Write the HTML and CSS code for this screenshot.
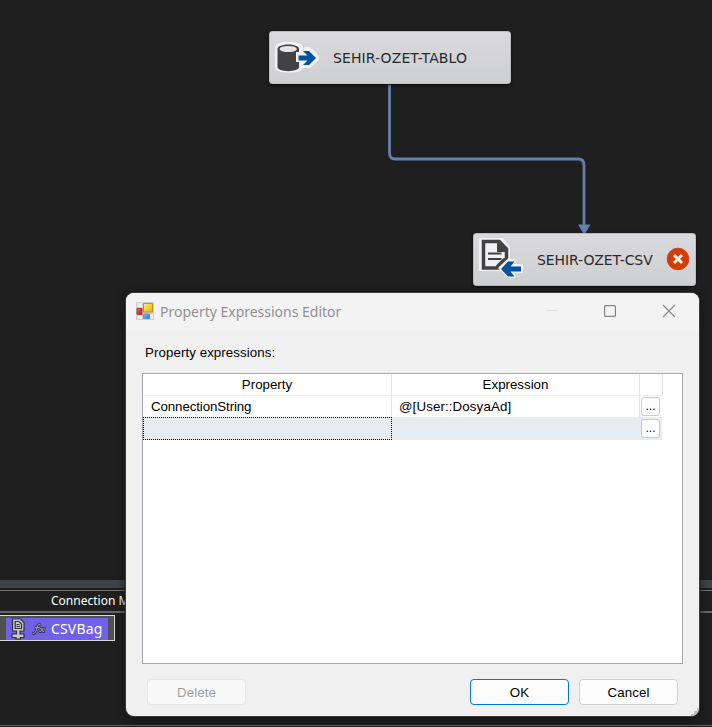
FILE: index.html
```html
<!DOCTYPE html>
<html lang="en">
<head>
<meta charset="utf-8">
<title>Property Expressions Editor</title>
<link rel="stylesheet" href="styles.css">
</head>
<body>
<main class="designer">
  <section class="canvas">
    <svg class="connector" width="712" height="290" viewBox="0 0 712 290">
      <path d="M389.500 84V153Q389.500 159 395.500 159H578Q584 159 584 165V226" fill="none" stroke="#6481ac" stroke-width="2.800"/>
      <path d="M578 224.500H590.500L585.500 233H583Z" fill="#6481ac"/>
    </svg>
    <div class="node node-source">
      <svg class="node-icon cylinder-icon" width="46" height="36" viewBox="0 0 46 36">
        <path d="M3 8C3 1 29 1 29 8V11H32V8H37L46 18L37 27H29C29 33 3 33 3 27Z" fill="#f1f1f3" stroke="#f1f1f3" stroke-width="2" stroke-linejoin="round"/>
        <path d="M4.500 9C4.500 3 26 3 26 9V12H23V22H26V27C26 32.500 4.500 32.500 4.500 27Z" fill="#424242"/>
        <ellipse cx="15.200" cy="9" rx="8.700" ry="3.100" fill="#e5e5e7"/>
        <path d="M25.500 15.500H34.500L30 11H36L43 18L36 25H30L34.500 20.500H25.500Z" fill="#00539c"/>
      </svg>
      <span class="label label-source">SEHIR-OZET-TABLO</span>
    </div>
    <div class="node node-target">
      <svg class="node-icon doc-icon" width="46" height="42" viewBox="0 0 46 42">
        <path d="M1 1H25L32 10V23L37 21L36 27H45V36H37V41H32L24 34H1Z" fill="#f1f1f3"/>
        <path d="M5.500 4.500H21L28.500 12V23H26L20 29V31H5.500Z" fill="#f1f1f3" stroke="#424242" stroke-width="3.500"/>
        <path d="M19 3H22L30 12V15H19Z" fill="#424242"/>
        <path d="M10 16.500H23.500M10 22H23.500" stroke="#424242" stroke-width="2.200"/>
        <path d="M20 31L30 21.500L38 24L35 28H44V35H35L38 40H29Z" fill="#f1f1f3"/>
        <path d="M23 32L30 24.500H36.500L32.500 29.500H43V34.500H32.500L36.500 39.500H30Z" fill="#00539c"/>
      </svg>
      <span class="label label-target">SEHIR-OZET-CSV</span>
      <svg class="error-icon" width="24" height="24" viewBox="0 0 24 24">
        <circle cx="12" cy="12" r="10.800" fill="#d83b01" stroke="#ba4b25"/>
        <path d="M8 8L16 16M16 8L8 16" stroke="#f4f0ee" stroke-width="3"/>
      </svg>
    </div>
  </section>
  <div class="splitter"></div>
  <section class="connections">
    <header class="connections-head"><span>Connection Managers</span></header>
    <div class="connection">
      <div class="connection-fill">
        <svg width="26" height="22" viewBox="0 0 26 22" class="connection-icon">
          <path d="M6.500 1H14.500L18 4.500V13H14V16H18V19.500H14.500V21H10V19.500H6V16H10.500V13H6.500Z" fill="#c8c8cc" stroke="#303034" stroke-width="1.200"/>
          <path d="M9.200 3.500H13L15.500 6V10.500H9.200Z" fill="#c8c8cc" stroke="#303034" stroke-width="1.200"/>
          <path d="M10.500 6.500H13.500M10.500 8.500H14" stroke="#303034"/>
        </svg>
        <svg class="fx" width="16" height="14" viewBox="0 0 16 14">
          <g fill="none" stroke-linecap="round">
            <path d="M1 11.500Q3 12 4 9L5.500 4Q6.200 2 8 2.500M3.500 5.500H7.500M8 6Q9.500 5.500 10 8Q10.500 10.500 12 9.500M12.500 6Q11 5.500 10 8Q9 10.500 7.500 9.500" stroke="#34323f" stroke-width="2.400"/>
            <path d="M1 11.500Q3 12 4 9L5.500 4Q6.200 2 8 2.500M3.500 5.500H7.500M8 6Q9.500 5.500 10 8Q10.500 10.500 12 9.500M12.500 6Q11 5.500 10 8Q9 10.500 7.500 9.500" stroke="#aaa7c2" stroke-width="0.900"/>
          </g>
        </svg>
        <span class="connection-name">CSVBag</span>
      </div>
    </div>
  </section>
  <footer class="bottom-edge"></footer>
</main>

<div class="dialog" role="dialog">
  <header class="titlebar">
    <svg class="app-icon" width="18" height="18" viewBox="0 0 18 18">
      <defs>
        <linearGradient id="gold" x2="1" y2="1"><stop stop-color="#ffe88a"/><stop offset="1" stop-color="#e8b200"/></linearGradient>
        <linearGradient id="red" x2="1" y2="1"><stop stop-color="#e0705e"/><stop offset="1" stop-color="#a81812"/></linearGradient>
        <linearGradient id="blue" x2="1" y2="1"><stop stop-color="#82b8ff"/><stop offset="1" stop-color="#3474d8"/></linearGradient>
      </defs>
      <path d="M0 0H18V18H0Z" fill="#cfcfcf"/>
      <path d="M1.500 1H6V5H1.500ZM1.500 13.500H6V17H1.500ZM14.500 12H17V17H14.500Z" fill="#efefef"/>
      <path d="M7.500 1.500H16.500V10H7.500Z" fill="url(#gold)" stroke="#c39600"/>
      <path d="M1 6.500H6V12.500H1Z" fill="url(#red)" stroke="#b33a2e"/>
      <path d="M7.500 12H13.500V16.500H7.500Z" fill="url(#blue)" stroke="#5a91e6"/>
    </svg>
    <h1 class="title">Property Expressions Editor</h1>
    <svg class="window-controls" width="132" height="14" viewBox="0 0 132 14">
      <path d="M0 6.500H12" stroke="#dedede"/>
      <rect x="58.600" y="1.600" width="10.800" height="10.800" rx="1" fill="none" stroke="#858585" stroke-width="1.200"/>
      <path d="M117 1L129 13M129 1L117 13" stroke="#858585" stroke-width="1.100"/>
    </svg>
  </header>
  <div class="dialog-body">
    <p class="caption">Property expressions:</p>
    <div class="table">
      <div class="row head">
        <div class="cell">Property</div><div class="cell">Expression</div><div class="cell"></div>
      </div>
      <div class="row entry">
        <div class="cell">ConnectionString</div><div class="cell expression">@[User::DosyaAd]</div><div class="cell action"><button class="more">...</button></div>
      </div>
      <div class="row selected">
        <div class="cell focused"></div><div class="cell"></div><div class="cell action"><button class="more">...</button></div>
      </div>
    </div>
    <div class="buttons">
      <button class="button" disabled>Delete</button>
      <button class="button primary">OK</button>
      <button class="button">Cancel</button>
    </div>
  </div>
  <svg class="grip" width="8" height="8" viewBox="0 0 8 8"><path d="M6 0H8V8H0V6H3V3H6Z" fill="#bdbdbd"/></svg>
</div>
</body>
</html>
```
FILE: styles.css
```css
* { box-sizing: border-box; }
body {
  margin: 0;
  width: 712px;
  height: 727px;
  overflow: hidden;
  background: #1f1f1f;
  font-family: "Liberation Sans", sans-serif;
}
.designer { display: flex; flex-direction: column; height: 727px; }
.canvas { position: relative; height: 580px; flex: none; }
.connector { position: absolute; left: 0; top: 0; }
.node {
  position: absolute;
  display: flex;
  align-items: center;
  height: 53px;
  border: 1px solid #bcbcbf;
  border-radius: 3px;
  background: linear-gradient(#d9d8dd, #cfd0d1);
  box-shadow: 0 1px 3px #0c0c0c;
}
.node-source { left: 269px; top: 31px; width: 242px; }
.node-target { left: 473px; top: 233px; width: 223px; }
.node-icon { flex: none; margin-left: 4px; }
.cylinder-icon { margin-left: 3px; margin-right: 1px; }
.doc-icon { margin-bottom: 3px; }
.label {
  font-family: "DejaVu Sans", sans-serif;
  font-size: 14px;
  line-height: 18px;
  color: #2a2a2c;
  white-space: nowrap;
  margin-left: 13px;
}
.label-source { letter-spacing: 0.1px; }
.label-target { letter-spacing: -0.1px; }
.error-icon { margin-left: auto; margin-right: 5px; margin-bottom: 2px; }
.splitter { flex: none; height: 8px; background: #3f4246; }
.connections { height: 137px; flex: none; padding-top: 2px; }
.connections-head {
  height: 23px;
  border-top: 1px solid #707070;
  border-bottom: 2px solid #666;
  padding-left: 51px;
  font: 12px/20px "Noto Sans", sans-serif;
  color: #fff;
}
.connection {
  width: 115px;
  height: 26px;
  margin-top: 2px;
  border: 1px solid #d5d5d5;
  border-left: 0;
  background: #505050;
  padding: 2px 6px 0;
}
.connection-fill { display: flex; align-items: center; height: 22px; background: #7160e8; }
.connection-icon { flex: none; }
.fx { flex: none; }
.connection-name {
  font: 14px/20px "Noto Sans", sans-serif;
  letter-spacing: 0.15px;
  color: #fff;
  margin-left: 3px;
}
.bottom-edge { height: 2px; flex: none; border-top: 1px solid #606060; }

.dialog {
  position: absolute;
  left: 126px;
  top: 293px;
  width: 573px;
  height: 423px;
  display: flex;
  flex-direction: column;
  overflow: hidden;
  border-radius: 8px;
  background: #f0f0f0;
  box-shadow: 0 0 0 1px #3c3c3c, 0 2px 10px #111;
}
.titlebar { display: flex; align-items: center; height: 37px; flex: none; background: #f3f3f3; padding-left: 10px; }
.app-icon { margin-bottom: 1px; }
.title {
  margin: 0 0 2px 6px;
  font: 400 15px/20px "Noto Sans", sans-serif;
  transform: scaleX(0.932);
  transform-origin: left;
  color: #919191;
  white-space: nowrap;
}
.window-controls { margin-left: auto; margin-right: 21px; margin-bottom: 1px; }
.dialog-body { display: flex; flex-direction: column; flex: 1; padding: 15px 16px 11px; }
.caption { margin: 0 0 12px 3px; font-size: 13.3px; letter-spacing: 0.08px; line-height: 16px; color: #000; }
.table { height: 291px; flex: none; border: 1px solid #a7a9af; background: #fff; font-size: 13.3px; color: #000; }
.row { display: grid; grid-template-columns: 249px 248px 23px; height: 22px; width: 520px; }
.cell { border-right: 1px solid #e7e7e7; line-height: 21px; padding-left: 8px; white-space: nowrap; }
.head .cell { border-bottom: 1px solid #ededed; padding: 0; text-align: center; }
.entry { height: 21px; letter-spacing: -0.1px; }
.entry .expression { padding-left: 7px; letter-spacing: 0.12px; }
.row .action { padding: 1px 0 0 1px; border-right-color: transparent; }
.selected { background: #e7ecf0; width: 519px; height: 23px; }
.selected .cell { border-right-color: transparent; }
.selected .focused { border: 1px dotted #000; }
.selected .action { padding-top: 2px; }
.more {
  display: block;
  width: 19px;
  height: 19px;
  padding: 0;
  border: 1px solid #cacaca;
  border-radius: 3px;
  background: #fdfdfd;
  font: 12px/15px "Liberation Sans", sans-serif;
  color: #000;
}
.buttons { display: flex; gap: 10px; margin-top: 15px; padding: 0 5px; }
.button {
  width: 99px;
  height: 26px;
  padding: 1px 0 0;
  border: 1px solid #d0d0d0;
  border-radius: 4px;
  background: #fdfdfd;
  font: 13.3px/22px "Liberation Sans", sans-serif;
  letter-spacing: 0.1px;
  color: #000;
}
.button:disabled { margin-right: auto; color: #a0a0a0; border-color: #e7e7e7; background: #f9f9f9; }
.primary { border-color: #0078d4; }
.grip { position: absolute; right: 0; bottom: 0; }
```
